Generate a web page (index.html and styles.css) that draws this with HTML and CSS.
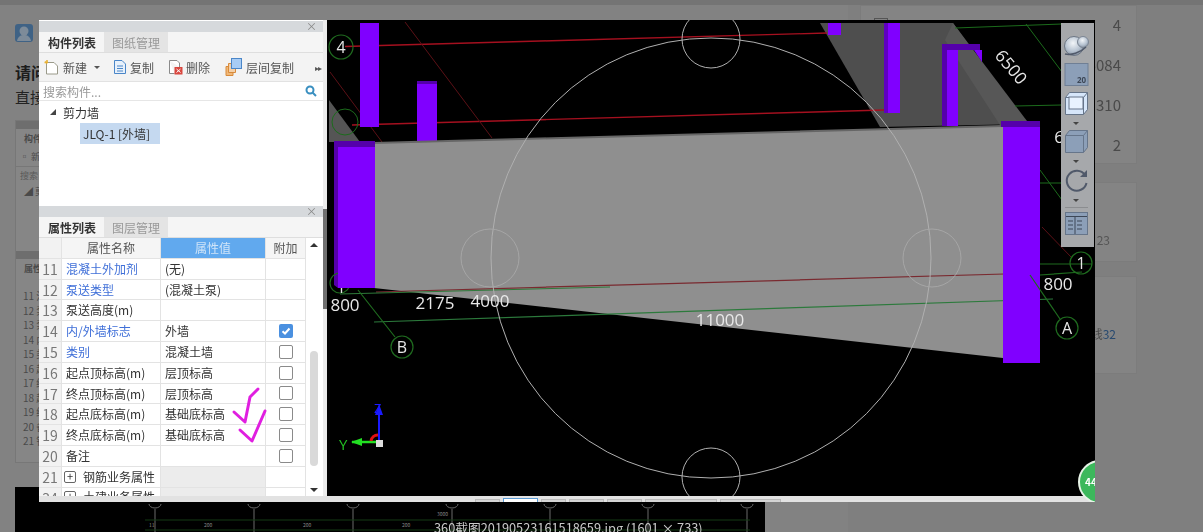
FILE: index.html
```html
<!DOCTYPE html>
<html lang="zh-CN">
<head>
<meta charset="utf-8">
<title>360截图20190523161518659.jpg</title>
<link rel="stylesheet" href="styles.css">
</head>
<body>
<div class="page">
  <div class="topband"></div>
  <div class="columns">
    <main class="main">
      <div class="avatar"><svg width="18" height="18" viewBox="0 0 18 18"><rect width="18" height="18" rx="3" fill="#3f6285"/><circle cx="9" cy="7" r="4.500" fill="#7d8b99"/><path d="M2 17c1-5 4-6 7-6s6 1 7 6z" fill="#7d8b99"/></svg></div>
      <h1 class="q-title">请问</h1>
      <p class="q-text">直接</p>
      <section class="mini">
        <div class="mini-title"></div>
        <div class="mini-tab">构件</div>
        <div class="mini-tool">▫ 新</div>
        <div class="mini-search">搜索</div>
        <div class="mini-tree">◢ 剪</div>
        <div class="mini-title mini-title-2"></div>
        <div class="mini-tab">属性</div>
        <div class="mini-rows">
          <div>11 混</div><div>12 泵</div><div>13 泵</div><div>14 内</div><div>15 类</div><div>16 起</div><div>17 终</div><div>18 起</div><div>19 终</div><div>20 备</div><div>21 钢</div>
        </div>
      </section>
      <section class="plan">
        <svg width="750" height="46" viewBox="15 486 750 46">
          <rect x="15" y="486" width="750" height="46" fill="#000"/>
          <g stroke="#6a6a6a" fill="none">
            <path d="M155 508V532M254 508V532M353 508V532M452 508V532M550 508V532M648 508V532M747 508V532"/>
            <path d="M149 503a6 4 0 0 0 12 0M248 503a6 4 0 0 0 12 0M347 503a6 4 0 0 0 12 0M446 503a6 4 0 0 0 12 0M544 503a6 4 0 0 0 12 0M642 503a6 4 0 0 0 12 0M741 503a6 4 0 0 0 12 0"/>
          </g>
          <path d="M145 519H750M145 529H750" stroke="#153a15"/>
          <g class="plan-label"><text x="149" y="526">11</text><text x="204" y="526">200</text><text x="303" y="526">200</text><text x="402" y="526">200</text><text x="437" y="515">3000</text></g>
        </svg>
      </section>
    </main>
    <aside class="rail">
      <section class="card card-stats">
        <div class="stat"><i class="stat-box"></i><span>4</span></div>
        <div class="stat"><span>5084</span></div>
        <div class="stat"><span>310</span></div>
        <div class="stat"><span>2</span></div>
      </section>
      <section class="card card-small"><span>23</span></section>
      <section class="card card-link"><span>线<a>32</a></span></section>
    </aside>
  </div>
</div>

<div class="viewer">
  <div class="viewer-body">
    <div class="side">
      <section class="panel panel-list">
        <div class="panel-title"><span>×</span></div>
        <div class="tabs"><div class="tab tab-on">构件列表</div><div class="tab">图纸管理</div></div>
        <div class="toolbar">
          <div class="tool"><svg width="16" height="16" viewBox="0 0 16 16"><path d="M2.500 3.500H10l3.500 3.500v8h-11z" fill="#fff" stroke="#9a9a8a"/><path d="M1 2.500 3 4.500M3 1v3M0.500 3.500H4" stroke="#e8b030" stroke-width="1.500"/></svg><span>新建</span><i class="caret"></i></div>
          <div class="tool"><svg width="14" height="16" viewBox="0 0 14 16"><path d="M1.500 1.500H9l3.500 3.500v9.500h-11z" fill="#e8f1fb" stroke="#4a86c8"/><path d="M4 7h6M4 9.500h6M4 12h6" stroke="#4a86c8"/></svg><span>复制</span></div>
          <div class="tool"><svg width="15" height="16" viewBox="0 0 15 16"><path d="M1.500 1.500H9l2.500 2.500v4M1.500 1.500v13h5" fill="#fff" stroke="#8a8a8a"/><rect x="6.500" y="8" width="8" height="7.500" fill="#d9473f"/><path d="M8.500 10l4 3.500M12.500 10l-4 3.500" stroke="#fff"/></svg><span>删除</span></div>
          <div class="tool"><svg width="18" height="18" viewBox="0 0 18 18"><path d="M1 8.500h7v9H1z" fill="#f0b878" stroke="#d88a3a"/><path d="M3.500 5.500h7v9h-7z" fill="#f4d0a8" stroke="#d88a3a"/><rect x="6.500" y="0.500" width="10" height="10" fill="#a8ccf4" stroke="#4a86c8"/></svg><span>层间复制</span></div>
          <div class="tool-more">▸▸</div>
        </div>
        <div class="search"><span>搜索构件...</span><svg width="12" height="12" viewBox="0 0 12 12"><circle cx="5" cy="5" r="3.500" fill="none" stroke="#3a8fc0" stroke-width="2"/><path d="M7.500 7.500 11 11" stroke="#3a8fc0" stroke-width="2"/></svg></div>
        <div class="tree">
          <div class="tree-root"><i class="tree-caret"></i>剪力墙</div>
          <div class="tree-leaf">JLQ-1 [外墙]</div>
        </div>
      </section>
      <section class="panel panel-props">
        <div class="panel-title"><span>×</span></div>
        <div class="tabs"><div class="tab tab-on">属性列表</div><div class="tab">图层管理</div></div>
        <div class="grid-wrap">
          <div class="grid">
            <div class="cell head num"></div><div class="cell head name">属性名称</div><div class="cell head value">属性值</div><div class="cell head extra">附加</div>

            <div class="cell num">11</div><div class="cell link">混凝土外加剂</div><div class="cell">(无)</div><div class="cell"></div>
            <div class="cell num">12</div><div class="cell link">泵送类型</div><div class="cell">(混凝土泵)</div><div class="cell"></div>
            <div class="cell num">13</div><div class="cell">泵送高度(m)</div><div class="cell"></div><div class="cell"></div>
            <div class="cell num">14</div><div class="cell link">内/外墙标志</div><div class="cell">外墙</div><div class="cell box-cell"><i class="box box-on"><svg width="14" height="14" viewBox="0 0 14 14"><path d="M3.500 7.200 6 9.500l4.500-5" fill="none" stroke="#fff" stroke-width="2"/></svg></i></div>
            <div class="cell num">15</div><div class="cell link">类别</div><div class="cell">混凝土墙</div><div class="cell box-cell"><i class="box"></i></div>
            <div class="cell num">16</div><div class="cell">起点顶标高(m)</div><div class="cell">层顶标高</div><div class="cell box-cell"><i class="box"></i></div>
            <div class="cell num">17</div><div class="cell">终点顶标高(m)</div><div class="cell">层顶标高</div><div class="cell box-cell"><i class="box"></i></div>
            <div class="cell num">18</div><div class="cell">起点底标高(m)</div><div class="cell">基础底标高</div><div class="cell box-cell"><i class="box"></i></div>
            <div class="cell num">19</div><div class="cell">终点底标高(m)</div><div class="cell">基础底标高</div><div class="cell box-cell"><i class="box"></i></div>
            <div class="cell num">20</div><div class="cell">备注</div><div class="cell"></div><div class="cell box-cell"><i class="box"></i></div>
            <div class="cell num">21</div><div class="cell group"><i class="plus">+</i>钢筋业务属性</div><div class="cell shade"></div><div class="cell"></div>
            <div class="cell num">34</div><div class="cell group"><i class="plus">+</i>土建业务属性</div><div class="cell shade"></div><div class="cell"></div>
          </div>
          <div class="scroll">
            <i class="arrow-up"></i>
            <div class="thumb"></div>
            <i class="arrow-down"></i>
          </div>
        </div>
        <svg class="marks" width="40" height="60" viewBox="230 385 40 60">
          <path d="M258 389 250 397 245 422 234 412M240 430 252 441 265 411" fill="none" stroke="#e01fe0" stroke-width="3" stroke-linecap="round" stroke-linejoin="round"/>
        </svg>
      </section>
    </div>
    <div class="splitter"><i></i></div>
    <div class="scene">
      <svg width="768" height="476" viewBox="327 20 768 476" class="scene-svg">
        <defs>
          <radialGradient id="ball" cx="45%" cy="35%" r="70%"><stop offset="0" stop-color="#f2f5f8"/><stop offset=".6" stop-color="#b7c3d1"/><stop offset="1" stop-color="#7f8b9b"/></radialGradient>
        </defs>
        <rect x="327" y="20" width="768" height="476" fill="#000"/>
        <!-- back walls -->
        <polygon points="820,23 953,23 1025,124 880,127" fill="#4e4e4e"/>
        <polygon points="953,23 1030,125 1000,125 945,40" fill="#575757"/>
        <polygon points="329,100 360,142 329,142" fill="#555"/>
        <!-- grid behind -->
        <g stroke="#a5101f" stroke-width="1.400" fill="none">
          <path d="M345 46.500 827 33"/>
          <path d="M352 125 884 110"/>
        </g>
        <g stroke="#5c1016" fill="none">
          <path d="M405 22 492 138M330 72 382 142M1042 227 1072 258"/>
        </g>
        <g stroke="#1c6b1c" fill="none">
          <path d="M955 28 1062 24M1026 24 1062 72M1015 106 1062 105M1040 170 1062 200M1040 183 1062 183"/>
          <circle cx="345" cy="122" r="13"/>
        </g>
        <!-- back columns -->
        <rect x="360" y="23" width="19" height="104" fill="#8000ff"/>
        <rect x="417" y="81" width="20" height="62" fill="#8000ff"/>
        <rect x="417" y="81" width="20" height="3" fill="#5500aa"/>
        <rect x="828" y="23" width="13" height="12" fill="#8000ff"/>
        <rect x="884" y="23" width="16" height="90" fill="#8000ff"/>
        <rect x="884" y="23" width="4" height="90" fill="#5f00c0"/>
        <rect x="947" y="50" width="11" height="76" fill="#8000ff"/>
        <rect x="942" y="44" width="5" height="82" fill="#5500aa"/>
        <rect x="942" y="44" width="38" height="6" fill="#5500aa"/>
        <polygon points="958,50 982,50 982,62 974,50" fill="#8000ff"/>
        <!-- main wall -->
        <polygon points="374,143 1003,126 1003,358 374,288" fill="#8f8f8f"/>
        <path d="M374 143 1003 126" stroke="#666" stroke-width="2"/>
        <!-- grid over the wall -->
        <path d="M376 292 1040 273" stroke="#7a2a30" stroke-width="1.200"/>
        <path d="M340 294 610 287" stroke="#2e7a3a"/>
        <path d="M374 322 1053 299" stroke="#2c7a3c" stroke-width="1.200"/>
        <!-- front columns -->
        <rect x="338" y="147" width="37" height="141" fill="#8000ff"/>
        <polygon points="334,141 375,141 375,147 338,147 338,288 334,285" fill="#5500aa"/>
        <polygon points="1003,127 1040,127 1040,363 1003,363" fill="#8000ff"/>
        <polygon points="1001,121 1040,121 1040,127 1001,127" fill="#5500aa"/>
        <!-- white circles -->
        <g stroke="#b0b0b0" fill="none">
          <circle cx="711" cy="258" r="220"/>
          <circle cx="711" cy="39" r="29"/>
          <circle cx="711" cy="477" r="29"/>
          <circle cx="490" cy="258" r="29" stroke="#a6a6a6"/>
          <circle cx="932" cy="258" r="29" stroke="#a6a6a6"/>
        </g>
        <!-- axes circles -->
        <g stroke="#1f6b1f" fill="none" stroke-width="1.200">
          <path d="M358 290 395 337M1030 275 1060 319M1040 264 1092 264M1040 275 1082 272"/>
          <circle cx="341" cy="47" r="12"/>
          <circle cx="402" cy="347" r="11"/>
          <circle cx="1067" cy="328" r="11"/>
          <circle cx="1081" cy="263" r="11"/>
          <circle cx="340" cy="283" r="10"/>
        </g>
        <g class="scene-text">
          <text x="341" y="53" text-anchor="middle">4</text>
          <text x="402" y="353" text-anchor="middle">B</text>
          <text x="1067" y="334" text-anchor="middle">A</text>
          <text x="1081" y="269" text-anchor="middle">1</text>
          <text x="341" y="293" text-anchor="middle">1</text>
        </g>
        <rect x="338" y="260" width="37" height="28" fill="#8000ff"/>
        <g class="scene-dim">
          <text x="345" y="311" text-anchor="middle">800</text>
          <text x="435" y="309" text-anchor="middle">2175</text>
          <text x="490" y="307" text-anchor="middle">4000</text>
          <text x="720" y="326" text-anchor="middle">11000</text>
          <text x="1058" y="290" text-anchor="middle">800</text>
          <text transform="translate(1011 67) rotate(50)" y="6" text-anchor="middle">6500</text>
          <text x="1059" y="143" text-anchor="middle">6</text>
        </g>
        <!-- axis gizmo -->
        <path d="M379 442V412" stroke="#1a1aff" stroke-width="2"/>
        <polygon points="379,404 375,415 383,415" fill="#1a1aff"/>
        <path d="M352 442H377" stroke="#22e022" stroke-width="2.500"/>
        <polygon points="351,442 362,438 362,446" fill="#22e022"/>
        <path d="M371 441a7 7 0 0 1 7-6" stroke="#e01010" stroke-width="3" fill="none"/>
        <rect x="376" y="440" width="7" height="7" fill="#ddd"/>
        <text class="axis-y" x="339" y="450">Y</text>
        <text class="axis-z" x="374" y="413">Z</text>
        <!-- right toolbar -->
        <rect x="1061" y="23" width="33" height="224" fill="#a6a8ab"/>
        <g>
          <circle cx="1074" cy="46" r="9.500" fill="url(#ball)" stroke="#6c7684"/>
          <circle cx="1083" cy="42" r="5.500" fill="url(#ball)" stroke="#7c8694"/>
          <path d="M1065 54c6 1.500 15-1 21-7" stroke="#50596a" stroke-width="1.500" fill="none"/>
          <rect x="1065" y="63.500" width="23" height="22" fill="#8c9fb8" stroke="#6f7f95"/>
          <text class="tool-20" x="1077" y="83">20</text>
          <path d="M1065.500 97.500h18v17h-18zM1065.500 97.500l4-5h18v17l-4 5M1083.500 97.500l4-5" fill="#d6e6fa" stroke="#66758a"/>
          <rect x="1069" y="97" width="14" height="12" fill="#e8f2ff" stroke="#66758a"/>
          <path d="M1073 122h6l-3 3z" fill="#444"/>
          <path d="M1065.500 135.500h18v17h-18zM1065.500 135.500l4-5h18v17l-4 5M1083.500 135.500l4-5" fill="#8c9fb8" stroke="#66758a"/>
          <path d="M1073 160h6l-3 3z" fill="#444"/>
          <path d="M1085 175a10 10 0 1 0 1.500 8" fill="none" stroke="#50596a" stroke-width="2"/>
          <path d="M1087 170v7h-7z" fill="#50596a"/>
          <path d="M1073 199h6l-3 3z" fill="#444"/>
          <path d="M1065 207.500h23" stroke="#8b8d90"/>
          <rect x="1065.500" y="212.500" width="22" height="22" fill="#8c9fb8" stroke="#66758a"/>
          <path d="M1066 216.500h21M1075 217v17M1068 221h5M1068 225h5M1068 229h5M1077 221h5M1077 225h5M1077 229h5" stroke="#3d4756"/>
        </g>
      </svg>
    </div>
  </div>
  <div class="thumbs">
    <i class="thumb-tab w1"></i><i class="thumb-tab thumb-on w2"></i><i class="thumb-tab w1"></i><i class="thumb-tab w2"></i><i class="thumb-tab w2"></i><i class="thumb-tab w3"></i><i class="thumb-tab w4"></i>
  </div>
  <div class="badge">44</div>
</div>
<div class="caption">360截图20190523161518659.jpg (1601 × 733)</div>
</body>
</html>
```
FILE: styles.css
```css
* { box-sizing: border-box; }
html, body { margin: 0; height: 100%; }
body {
  position: relative;
  overflow: hidden;
  background: #7f7f7f;
  font-family: "Noto Sans CJK SC", "Noto Sans", sans-serif;
  color: #333;
}
i { font-style: normal; display: block; }

/* dimmed page behind the lightbox */
.page { width: 1203px; height: 532px; overflow: hidden; filter: blur(.4px); }
.topband { height: 5px; background: #747474; }
.columns { display: flex; align-items: flex-start; }
.main { width: 848px; height: 527px; background: #828282; padding: 19px 0 0 15px; }
.avatar { height: 18px; line-height: 0; }
.q-title { margin: 18px 0 0; font-size: 16px; line-height: 24px; font-weight: 700; color: #1c1c1c; white-space: nowrap; }
.q-text { margin: 1px 0 0; font-size: 15px; line-height: 24px; color: #222; white-space: nowrap; }
.mini { width: 750px; height: 343px; margin-top: 11px; background: #868686; border: 1px solid #777; font-size: 9px; color: #4a4a4a; }
.mini-title { height: 8px; background: #6e6e6e; }
.mini-title-2 { margin-top: 52px; }
.mini-tab { padding-left: 8px; line-height: 18px; margin-top: 1px; font-weight: 700; }
.mini-tool { padding-left: 4px; line-height: 18px; }
.mini-search { padding-left: 4px; line-height: 18px; border-top: 1px solid #777; color: #5a5a5a; }
.mini-tree { padding-left: 8px; line-height: 14px; }
.mini-rows { margin-top: 11px; padding-left: 7px; }
.mini-rows div { height: 14.5px; line-height: 14.5px; font-size: 10px; }
.plan { width: 750px; height: 46px; margin-top: 24px; line-height: 0; }
.plan-label { font-size: 5px; fill: #888; }

.rail { width: 277px; margin-left: 12px; display: flex; flex-direction: column; }
.card { background: #848484; border: 1px solid #7c7c7c; }
.card-stats { height: 159px; margin-bottom: 18px; }
.stat { position: relative; height: 40px; display: flex; align-items: center; justify-content: flex-end; padding: 0 15px 4px 0; font-size: 15px; color: #4a4a4a; }
.stat-box { position: absolute; left: 13px; top: 12px; width: 14px; height: 14px; border: 1px solid #555; }
.card-small { height: 80px; margin-bottom: 14px; text-align: right; padding: 48px 26px 0 0; font-size: 12px; line-height: 18px; color: #555; }
.card-link { height: 98px; text-align: right; padding: 47px 20px 0 0; font-size: 12px; line-height: 20px; color: #4a4a4a; }
.card-link a { color: #27496f; }

/* lightbox */
.viewer {
  position: absolute;
  left: 39px;
  top: 20px;
  width: 1056px;
  height: 482px;
  overflow: hidden;
  display: flex;
  flex-direction: column;
  background: #e2e2e2;
  filter: blur(.35px);
}
.viewer-body { display: flex; height: 476px; }
.side { width: 284px; background: #fff; padding-top: 1px; display: flex; flex-direction: column; gap: 5px; }
.panel { position: relative; }
.panel-list { height: 180px; }
.panel-props { flex: 1; min-height: 0; overflow: hidden; }
.panel-title { height: 11px; background: #d6d9dc; display: flex; justify-content: flex-end; align-items: center; padding-right: 6px; font-size: 11px; line-height: 11px; color: #888; }
.tabs { display: flex; height: 21px; background: #f5f5f5; padding-left: 1px; border-bottom: 1px solid #dedede; }
.tab { width: 64px; text-align: center; font-size: 12px; line-height: 21px; color: #999; background: #e4e4e4; }
.tab-on { background: #f5f5f5; color: #333; font-weight: 700; }

.toolbar { height: 29px; background: #f3f3f3; border-bottom: 1px solid #e2e2e2; display: grid; grid-template-columns: 69px 55px 57px 90px auto; align-items: center; padding-left: 5px; font-size: 12px; color: #555; }
.tool { display: flex; align-items: center; gap: 3px; }
.tool-more { font-size: 8px; color: #555; letter-spacing: -1px; }
.caret { width: 0; height: 0; margin-left: 4px; border: 3px solid transparent; border-top-color: #555; border-bottom: 0; }
.search { height: 19px; display: flex; align-items: center; justify-content: space-between; padding: 0 6px 0 4px; font-size: 12px; color: #999; border-bottom: 1px solid #e6e6e6; }
.tree { font-size: 12px; color: #333; }
.tree-root { display: flex; align-items: center; height: 22px; padding-left: 24px; position: relative; }
.tree-caret { position: absolute; left: 11px; top: 8px; width: 0; height: 0; border-left: 6px solid transparent; border-bottom: 6px solid #444; }
.tree-leaf { margin-left: 41px; width: 80px; height: 21px; line-height: 22px; background: #c5d9f0; padding-left: 3px; white-space: nowrap; }

.grid-wrap { display: flex; height: 258px; overflow: hidden; }
.grid { width: 267px; display: grid; grid-template-columns: 23px 99px 105px 40px; grid-auto-rows: 20.8px; align-content: start; }
.cell { border-right: 1px solid #e3e3e3; border-bottom: 1px solid #e3e3e3; font-size: 12px; line-height: 20px; padding-left: 4px; white-space: nowrap; overflow: hidden; color: #333; }
.cell.num { background: #f2f2f2; color: #777; font-size: 14px; text-align: center; padding: 0; }
.head { background: #f5f5f5; text-align: center; padding: 0; color: #555; }
.head.value { background: #61a9ee; color: #cfe4f8; }
.cell.link { color: #3f6fd8; }
.cell.shade { background: #ececec; }
.group { display: flex; align-items: center; gap: 7px; padding-left: 2px; }
.plus { width: 12px; height: 12px; border: 1px solid #666; border-radius: 2px; line-height: 9px; text-align: center; font-size: 11px; color: #333; }
.box-cell { display: flex; align-items: center; justify-content: center; padding: 0; }
.box { width: 14px; height: 14px; border: 1px solid #8a8a8a; border-radius: 2px; background: #fff; }
.box-on { border: 0; background: #4a90e0; line-height: 0; }
.scroll { width: 16px; position: relative; display: flex; flex-direction: column; align-items: center; padding-top: 5px; }
.arrow-up { width: 0; height: 0; border: 4px solid transparent; border-bottom: 4px solid #333; border-top: 0; }
.arrow-down { width: 0; height: 0; border: 4px solid transparent; border-top: 4px solid #333; border-bottom: 0; margin-top: 22px; }
.thumb { width: 8px; height: 115px; margin-top: 104px; border-radius: 4px; background: #d9d9d9; }
.marks { position: absolute; left: 191px; top: 179px; }

.splitter { width: 4px; background: #ececec; }
.splitter i { width: 4px; height: 100px; margin-top: 189px; background: #707070; }
.scene { width: 768px; height: 476px; line-height: 0; }
.scene-svg { display: block; }
.scene-text { font-family: "Open Sans", sans-serif; font-size: 16px; fill: #e6e6e6; }
.scene-dim { font-family: "Open Sans", sans-serif; font-size: 17px; fill: #e8e8e8; }
.axis-y { font-family: "Open Sans", sans-serif; font-size: 15px; fill: #22c022; }
.axis-z { font-family: "Open Sans", sans-serif; font-size: 13px; fill: #1a1aff; }
.tool-20 { font-family: "Open Sans", sans-serif; font-size: 8px; font-weight: 700; fill: #3d4756; }

.thumbs { height: 6px; display: flex; align-items: flex-end; gap: 3px; padding-left: 436px; }
.thumb-tab { height: 3px; background: #d4d4d4; border: 1px solid #bbb; border-bottom: 0; }
.thumb-on { height: 4px; background: #fff; border-color: #5b9bd5; }
.w1 { width: 25px; }
.w2 { width: 35px; }
.w3 { width: 72px; }
.w4 { width: 61px; }
.badge { position: absolute; left: 1039px; top: 440px; width: 44px; height: 44px; border-radius: 50%; background: #3cb85c; border: 2px solid #e6f2e6; color: #fff; font-size: 10px; font-weight: 700; line-height: 40px; padding-left: 5px; }
.caption { position: absolute; left: 434px; top: 518px; font-size: 12.75px; line-height: 19px; color: #c9c9c9; white-space: nowrap; }
```
